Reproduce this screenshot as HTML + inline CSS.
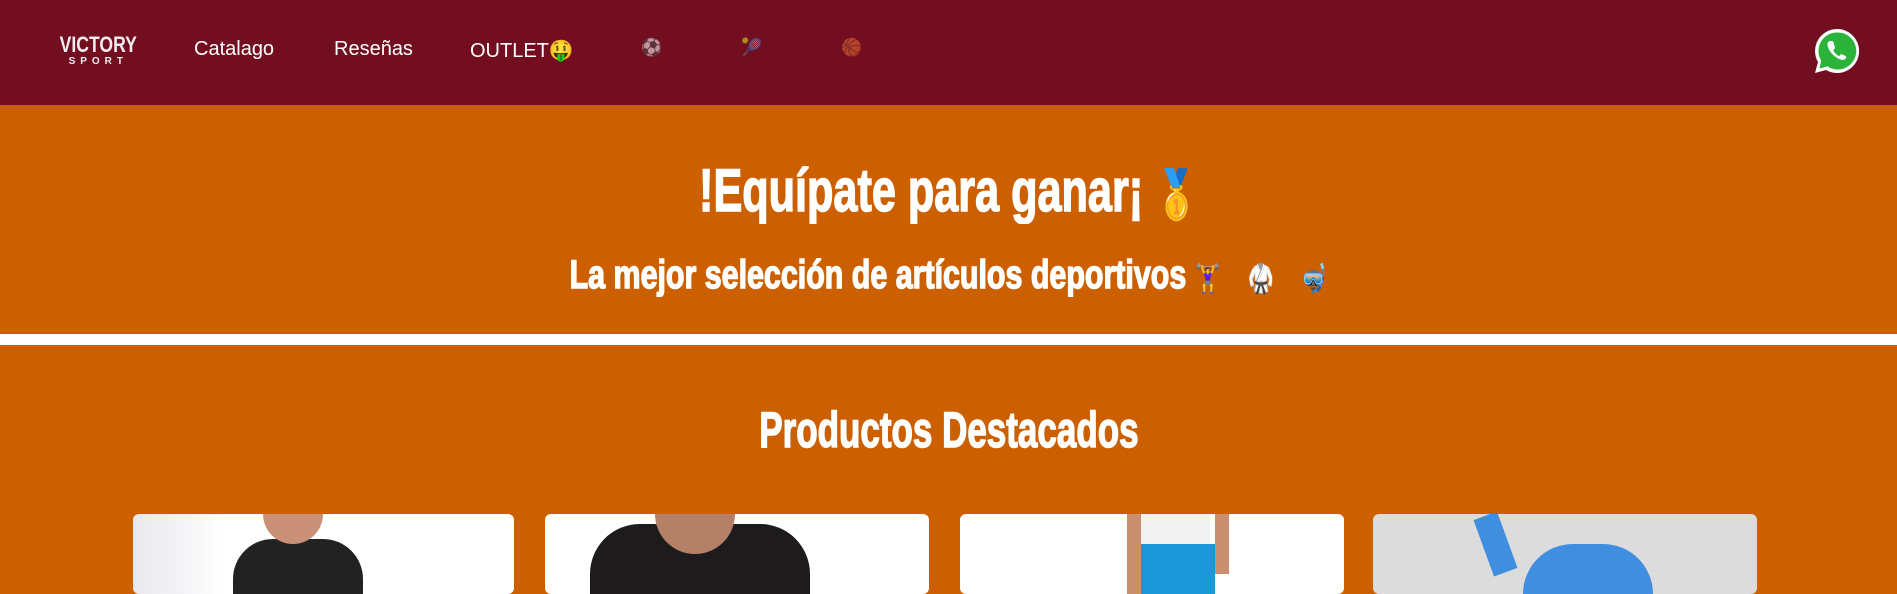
<!DOCTYPE html>
<html><head><meta charset="utf-8"><style>
*{margin:0;padding:0;box-sizing:border-box}
body{width:1897px;height:590px;overflow:hidden;background:#cc6000;font-family:"Liberation Sans",sans-serif}
.hdr{position:absolute;left:0;top:0;width:1897px;height:105px;background:#730e20}
.nav{position:absolute;top:38px;color:#fff;font-size:20px}
.logo{position:absolute;left:50px;top:34px;color:#eee;font-family:"Liberation Sans Narrow","Liberation Sans",sans-serif;font-weight:bold;text-align:center;line-height:1}
.cond{font-family:"Liberation Sans Narrow","Liberation Sans",sans-serif;font-weight:bold;color:#fff;position:absolute;left:0;width:1897px;text-align:center;white-space:nowrap;-webkit-text-stroke:1.5px #fff}
.cond span.t{display:inline-block}
.band{position:absolute;left:0;top:334px;width:1897px;height:11px;background:#fff}
.card{position:absolute;top:514px;height:80px;background:#fff;border-radius:6px;overflow:hidden}
.emo{font-family:"Noto Color Emoji",sans-serif;-webkit-text-stroke:0}
</style></head><body>
<div class="hdr">
 <div class="logo"><div style="font-size:22px;transform:scaleX(0.8)">VICTORY</div><div style="font-size:10px;letter-spacing:5px;margin-top:1px">SPORT</div></div>
 <div class="nav" style="left:194px">Catalago</div>
 <div class="nav" style="left:334px">Reseñas</div>
 <div class="nav" style="left:470px">OUTLET<span class="emo">🤑</span></div>
 <div class="nav emo" style="left:641px;font-size:17px;opacity:.55">⚽</div>
 <div class="nav emo" style="left:741px;font-size:17px;opacity:.55">🎾</div>
 <div class="nav emo" style="left:841px;font-size:17px;opacity:.55">🏀</div>
 <svg style="position:absolute;left:1813px;top:27px" width="48" height="48" viewBox="0 0 48 48">
  <path d="M24 2a22 22 0 0 0-19 33L2 46l11-3A22 22 0 1 0 24 2z" fill="#fff"/>
  <path d="M24 5.5a18.5 18.5 0 0 0-15.8 28.2L6.5 41.5l8-2.1A18.5 18.5 0 1 0 24 5.5z" fill="#2bb33a"/>
  <path d="M17 14c-1 0-2.5 1.3-2.5 3.5 0 5 6 12.5 13 15 2.5.9 4.5 0 5.3-1.3.5-.8.4-1.8-.3-2.2l-3.5-1.8c-.6-.3-1.2 0-1.6.6l-1 1.3c-2.8-1.1-5-3.3-6.2-6l1.3-1.2c.5-.4.6-1 .4-1.5L20.3 15c-.3-.7-1-1-1.7-1z" fill="#fff"/>
 </svg>
</div>
<div class="cond" style="top:156px;font-size:60px;line-height:70px"><span class="t" style="transform:scaleX(0.72)">!Equípate para ganar¡ <span class="emo" style="font-size:48px">🥇</span></span></div>
<div class="cond" style="top:250px;font-size:40px;line-height:50px"><span class="t" style="transform:scaleX(0.76)">La mejor selección de artículos deportivos <span class="emo" style="font-size:28px">🏋️‍♀️ 🥋 🤿</span></span></div>
<div class="band"></div>
<div class="cond" style="top:400px;font-size:50px;line-height:60px"><span class="t" style="transform:scaleX(0.7)">Productos Destacados</span></div>
<div class="card" style="left:133px;width:381px;background:linear-gradient(90deg,#e8e8ee 0,#fff 25%,#fff 100%)">
 <div style="position:absolute;left:100px;top:25px;width:130px;height:60px;background:#222;border-radius:40px 40px 0 0"></div>
 <div style="position:absolute;left:130px;top:0;width:60px;height:30px;background:#c99077;border-radius:0 0 30px 30px"></div></div>
<div class="card" style="left:545px;width:384px">
 <div style="position:absolute;left:45px;top:10px;width:220px;height:70px;background:#1d1b1b;border-radius:50px 50px 0 0"></div>
 <div style="position:absolute;left:110px;top:0;width:80px;height:40px;background:#b58068;border-radius:0 0 40px 40px"></div></div>
<div class="card" style="left:960px;width:384px">
 <div style="position:absolute;left:180px;top:0;width:70px;height:35px;background:#f2f2f2"></div>
 <div style="position:absolute;left:180px;top:30px;width:75px;height:50px;background:#1a98d8"></div>
 <div style="position:absolute;left:167px;top:0;width:14px;height:80px;background:#c98f6e"></div>
 <div style="position:absolute;left:255px;top:0;width:14px;height:60px;background:#c98f6e"></div></div>
<div class="card" style="left:1373px;width:384px;background:#dcdcdc">
 <div style="position:absolute;left:150px;top:30px;width:130px;height:60px;background:#3f8ee0;border-radius:50px 50px 0 0"></div>
 <div style="position:absolute;left:110px;top:0;width:25px;height:60px;background:#3f8ee0;transform:rotate(-20deg)"></div></div>
</body></html>
